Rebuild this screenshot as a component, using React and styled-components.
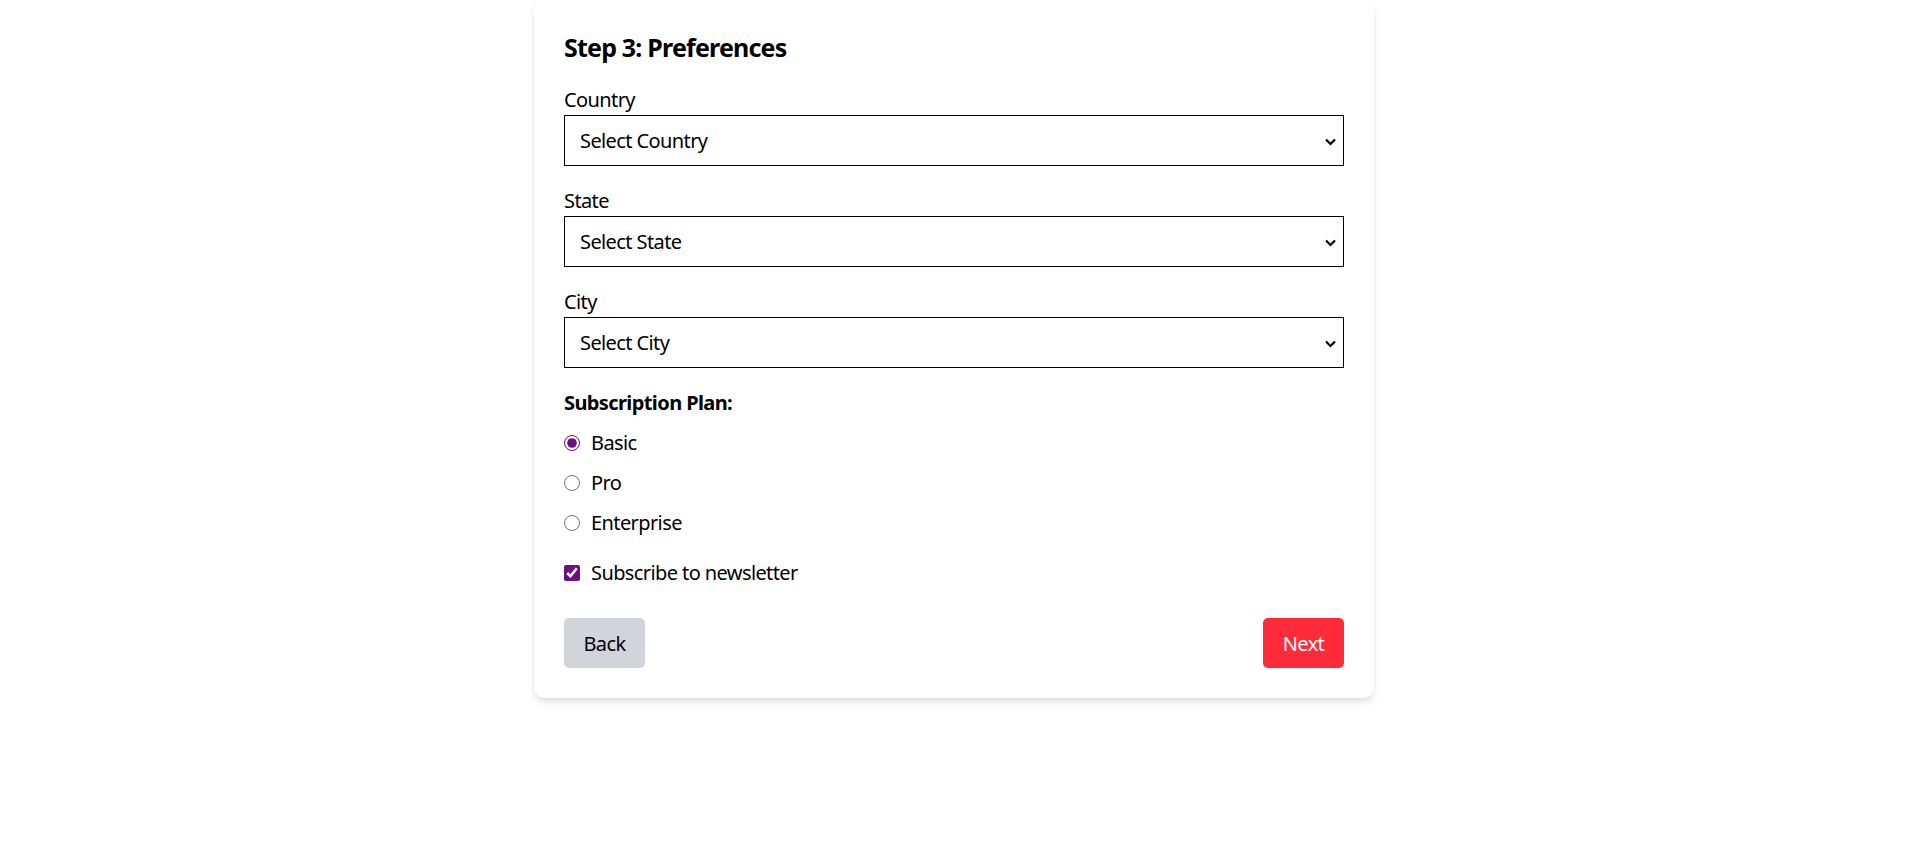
import React, { useState } from 'react';
import styled, { createGlobalStyle } from 'styled-components';

const GlobalStyle = createGlobalStyle`
  html, body {
    margin: 0;
    padding: 0;
    background: #fff;
  }
  body {
    font-family: "Noto Sans", "Open Sans", sans-serif;
    color: #000;
    letter-spacing: -0.6px;
  }
  * {
    box-sizing: border-box;
  }
`;

const Page = styled.div`
  display: flex;
  justify-content: center;
  min-height: 861px;
  padding-right: 5px;
`;

const Card = styled.div`
  width: 840px;
  align-self: flex-start;
  background: #fff;
  border-radius: 10px;
  padding: 30px;
  box-shadow: 0 5px 8px -1px rgba(0, 0, 0, 0.1), 0 2px 5px -2px rgba(0, 0, 0, 0.1);
`;

const Title = styled.h2`
  margin: 0 0 20px;
  font-size: 25px;
  line-height: 35px;
  font-weight: 700;
  letter-spacing: -0.8px;
`;

const Field = styled.div`
  margin-bottom: 20px;
`;

const Label = styled.label`
  display: block;
  font-size: 20px;
  line-height: 30px;
  font-weight: ${p => (p.bold ? 700 : 400)};
  margin-bottom: ${p => (p.bold ? '10px' : '0')};
`;

const SelectWrap = styled.div`
  position: relative;
`;

const Select = styled.select`
  appearance: none;
  display: block;
  width: 100%;
  height: 51px;
  border: 1px solid #000;
  border-radius: 0;
  background: #fff;
  padding: 0 30px 0 15px;
  font-family: inherit;
  font-size: 20px;
  letter-spacing: -0.6px;
  color: #000;
  outline: none;
`;

const Chevron = styled.svg`
  position: absolute;
  right: 8px;
  top: 50%;
  width: 11px;
  height: 8px;
  margin-top: -3px;
  pointer-events: none;
`;

const RadioGroup = styled.div`
  display: flex;
  flex-direction: column;
  gap: 10px;
  margin-bottom: 20px;
`;

const Option = styled.label`
  display: flex;
  align-items: center;
  gap: 11px;
  font-size: 20px;
  line-height: 30px;
`;

const Radio = styled.input`
  width: 16px;
  height: 16px;
  margin: 0;
  accent-color: #6d0e84;
`;

const CheckRow = styled(Option)`
  margin-bottom: 30px;
`;

const Actions = styled.div`
  display: flex;
  justify-content: space-between;
`;

const Button = styled.button`
  height: 50px;
  width: 81px;
  padding: 0;
  border: none;
  border-radius: 5px;
  font-family: inherit;
  font-size: 20px;
  letter-spacing: -0.6px;
  background: ${p => (p.primary ? '#ff2b3a' : '#d1d5db')};
  color: ${p => (p.primary ? '#fff' : '#000')};
  cursor: pointer;
`;

const SelectField = ({ label, placeholder }) => (
  <Field>
    <Label>{label}</Label>
    <SelectWrap>
      <Select defaultValue="">
        <option value="">{placeholder}</option>
      </Select>
      <Chevron viewBox="0 0 11 8">
        <path d="M1 1.5 L5.5 6 L10 1.5" fill="none" stroke="#000" strokeWidth="2.2" />
      </Chevron>
    </SelectWrap>
  </Field>
);

const plans = ['Basic', 'Pro', 'Enterprise'];

export default function App() {
  const [plan, setPlan] = useState('Basic');
  const [news, setNews] = useState(true);

  return (
    <Page>
      <GlobalStyle />
      <Card>
        <Title>Step 3: Preferences</Title>
        <SelectField label="Country" placeholder="Select Country" />
        <SelectField label="State" placeholder="Select State" />
        <SelectField label="City" placeholder="Select City" />
        <Label bold>Subscription Plan:</Label>
        <RadioGroup>
          {plans.map(p => (
            <Option key={p}>
              <Radio
                type="radio"
                name="plan"
                checked={plan === p}
                onChange={() => setPlan(p)}
              />
              {p}
            </Option>
          ))}
        </RadioGroup>
        <CheckRow>
          <Radio type="checkbox" checked={news} onChange={() => setNews(!news)} />
          Subscribe to newsletter
        </CheckRow>
        <Actions>
          <Button>Back</Button>
          <Button primary>Next</Button>
        </Actions>
      </Card>
    </Page>
  );
}
